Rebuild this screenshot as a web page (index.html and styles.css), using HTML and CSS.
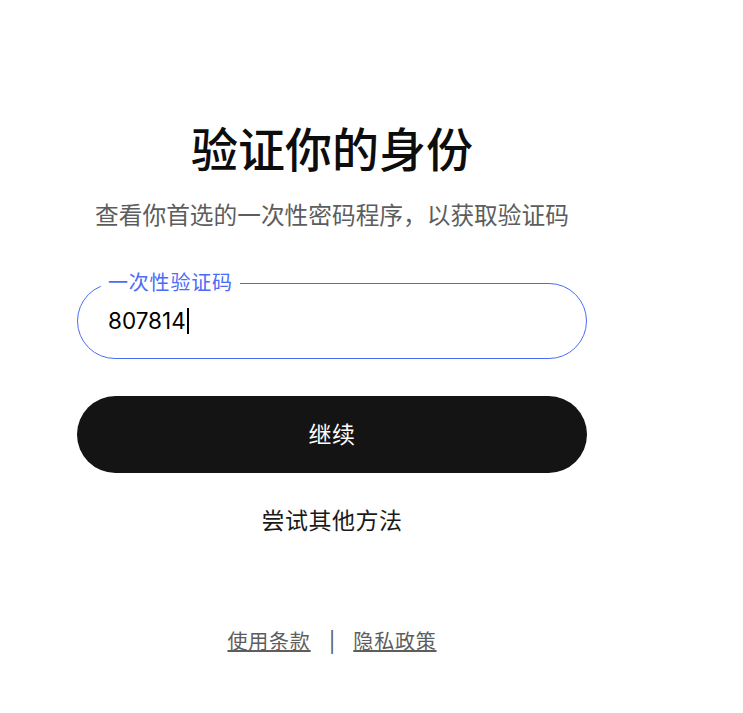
FILE: index.html
```html
<!DOCTYPE html>
<html lang="zh-CN">
<head>
    <meta charset="UTF-8">
    <meta name="viewport" content="width=device-width, initial-scale=1.0">
    <title>验证你的身份</title>
    <link rel="stylesheet" href="styles.css">
</head>
<body>
    <main class="page">
        <h1 class="title">验证你的身份</h1>
        <p class="subtitle">查看你首选的一次性密码程序，以获取验证码</p>

        <form class="otp-form" action="#" method="POST">
            <div class="field">
                <label class="field-label" for="code">一次性验证码</label>
                <div class="field-value" id="code">807814<span class="caret"></span></div>
            </div>
            <button type="submit" class="btn-continue">继续</button>
        </form>

        <a class="other-method" href="#">尝试其他方法</a>

        <footer class="footer">
            <a href="#">使用条款</a>
            <span class="sep">|</span>
            <a href="#">隐私政策</a>
        </footer>
    </main>
</body>
</html>
```

FILE: styles.css
```css
body {
    margin: 0;
    background: #fff;
    color: #0d0d0d;
    font-family: Inter, "Noto Sans CJK SC", sans-serif;
}
.page {
    width: 664px;
    padding-top: 121px;
    display: flex;
    flex-direction: column;
    align-items: center;
}
.title {
    margin: 0;
    font-size: 47px;
    line-height: 58px;
    font-weight: 500;
}
.subtitle {
    margin: 22px 0 0;
    font-size: 23.7px;
    line-height: 30px;
    color: #5d5d5d;
}
.otp-form {
    width: 510px;
    margin-top: 52px;
}
.field {
    position: relative;
    height: 76px;
    box-sizing: border-box;
    border: 1px solid #4a6cf7;
    border-radius: 38px;
    padding-left: 30px;
    display: flex;
    align-items: center;
}
.field-label {
    position: absolute;
    top: -13px;
    left: 23px;
    padding: 0 7px;
    background: #fff;
    color: #4a6cf7;
    font-size: 20px;
    line-height: 24px;
    letter-spacing: 0.8px;
}
.field-value {
    font-size: 22.5px;
    line-height: 28px;
    color: #000;
    display: flex;
    align-items: center;
}
.caret {
    display: inline-block;
    width: 2px;
    height: 26px;
    background: #000;
    margin-left: 1px;
}
.btn-continue {
    display: block;
    width: 100%;
    height: 77px;
    margin-top: 37px;
    border: none;
    border-radius: 39px;
    background: #141414;
    color: #fff;
    font-family: inherit;
    font-size: 23px;
    letter-spacing: 0.5px;
    padding-bottom: 4px;
    cursor: pointer;
}
.other-method {
    margin-top: 33px;
    font-size: 23px;
    line-height: 30px;
    letter-spacing: 0.5px;
    color: #1a1a1a;
    text-decoration: none;
}
.footer {
    margin-top: 91px;
    font-size: 20px;
    line-height: 30px;
    color: #5d5d5d;
    display: flex;
    gap: 18px;
}
.footer a {
    color: #5d5d5d;
    letter-spacing: 0.8px;
}
```
